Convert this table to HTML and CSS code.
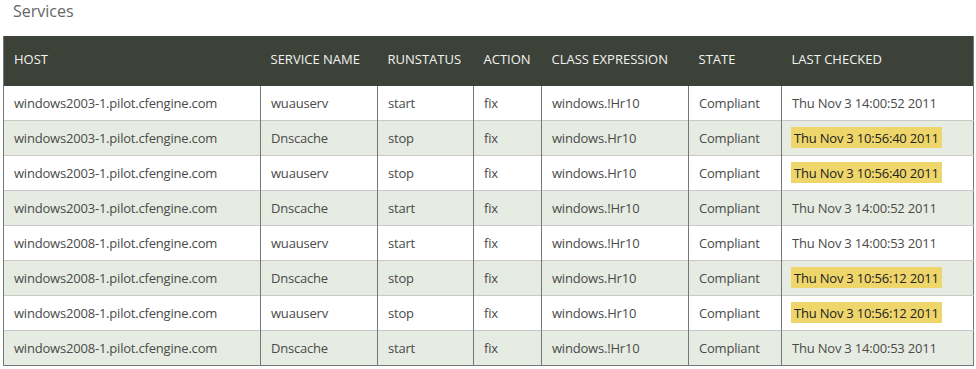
FILE: index.html
```html
<!DOCTYPE html>
<html lang="en">
<head>
    <meta charset="UTF-8">
    <meta name="viewport" content="width=device-width, initial-scale=1.0">
    <title>Services</title>
    <link rel="stylesheet" href="styles.css">
</head>
<body>
    <h2 class="title">Services</h2>

    <table class="services">
        <colgroup>
            <col class="col-host">
            <col class="col-service">
            <col class="col-run">
            <col class="col-action">
            <col class="col-class">
            <col class="col-state">
            <col class="col-checked">
        </colgroup>
        <thead>
            <tr>
                <th>HOST</th>
                <th>SERVICE NAME</th>
                <th>RUNSTATUS</th>
                <th>ACTION</th>
                <th>CLASS EXPRESSION</th>
                <th>STATE</th>
                <th>LAST CHECKED</th>
            </tr>
        </thead>
        <tbody>
            <tr>
                <td>windows2003-1.pilot.cfengine.com</td>
                <td>wuauserv</td>
                <td>start</td>
                <td>fix</td>
                <td>windows.!Hr10</td>
                <td>Compliant</td>
                <td>Thu Nov 3 14:00:52 2011</td>
            </tr>
            <tr>
                <td>windows2003-1.pilot.cfengine.com</td>
                <td>Dnscache</td>
                <td>stop</td>
                <td>fix</td>
                <td>windows.Hr10</td>
                <td>Compliant</td>
                <td><span class="stale">Thu Nov 3 10:56:40 2011</span></td>
            </tr>
            <tr>
                <td>windows2003-1.pilot.cfengine.com</td>
                <td>wuauserv</td>
                <td>stop</td>
                <td>fix</td>
                <td>windows.Hr10</td>
                <td>Compliant</td>
                <td><span class="stale">Thu Nov 3 10:56:40 2011</span></td>
            </tr>
            <tr>
                <td>windows2003-1.pilot.cfengine.com</td>
                <td>Dnscache</td>
                <td>start</td>
                <td>fix</td>
                <td>windows.!Hr10</td>
                <td>Compliant</td>
                <td>Thu Nov 3 14:00:52 2011</td>
            </tr>
            <tr>
                <td>windows2008-1.pilot.cfengine.com</td>
                <td>wuauserv</td>
                <td>start</td>
                <td>fix</td>
                <td>windows.!Hr10</td>
                <td>Compliant</td>
                <td>Thu Nov 3 14:00:53 2011</td>
            </tr>
            <tr>
                <td>windows2008-1.pilot.cfengine.com</td>
                <td>Dnscache</td>
                <td>stop</td>
                <td>fix</td>
                <td>windows.Hr10</td>
                <td>Compliant</td>
                <td><span class="stale">Thu Nov 3 10:56:12 2011</span></td>
            </tr>
            <tr>
                <td>windows2008-1.pilot.cfengine.com</td>
                <td>wuauserv</td>
                <td>stop</td>
                <td>fix</td>
                <td>windows.Hr10</td>
                <td>Compliant</td>
                <td><span class="stale">Thu Nov 3 10:56:12 2011</span></td>
            </tr>
            <tr>
                <td>windows2008-1.pilot.cfengine.com</td>
                <td>Dnscache</td>
                <td>start</td>
                <td>fix</td>
                <td>windows.!Hr10</td>
                <td>Compliant</td>
                <td>Thu Nov 3 14:00:53 2011</td>
            </tr>
        </tbody>
    </table>
</body>
</html>
```

FILE: styles.css
```css
/* Basic Reset */
* {
    margin: 0;
    padding: 0;
    box-sizing: border-box;
}

body {
    font-family: 'Open Sans', 'Liberation Sans', sans-serif;
    background-color: #fff;
    color: #4a4a4a;
}

.title {
    font-size: 16px;
    font-weight: normal;
    line-height: 22px;
    color: #666;
    padding-left: 13px;
    margin-bottom: 14px;
}

/* Services table */
.services {
    margin-left: 3px;
    width: 970px;
    border-collapse: collapse;
    table-layout: fixed;
    font-size: 13px;
    border-left: 1px solid #777;
    border-right: 1px solid #777;
    border-bottom: 1px solid #777;
}

.col-host { width: 257px; }
.col-service { width: 117px; }
.col-run { width: 96px; }
.col-action { width: 68px; }
.col-class { width: 147px; }
.col-state { width: 93px; }
.col-checked { width: 192px; }

.services th {
    background-color: #3d4239;
    color: #f2f2f2;
    font-weight: normal;
    text-align: left;
    line-height: 18px;
    padding: 14px 10px 18px;
    white-space: nowrap;
}

.services td {
    line-height: 18px;
    padding: 8px 10px;
    border-left: 1px solid #777;
    border-top: 1px solid #c8c8c8;
    white-space: nowrap;
    letter-spacing: -0.2px;
}

.services thead + tbody tr:first-child td {
    border-top: none;
}

.services tbody tr:nth-child(even) td {
    background-color: #e6ece2;
}

.stale {
    display: inline-block;
    background-color: #efd66b;
    color: #222;
    padding: 2px 3px 1px;
    margin-left: -1px;
    line-height: 18px;
    margin-top: -2px;
    margin-bottom: -1px;
}
```
